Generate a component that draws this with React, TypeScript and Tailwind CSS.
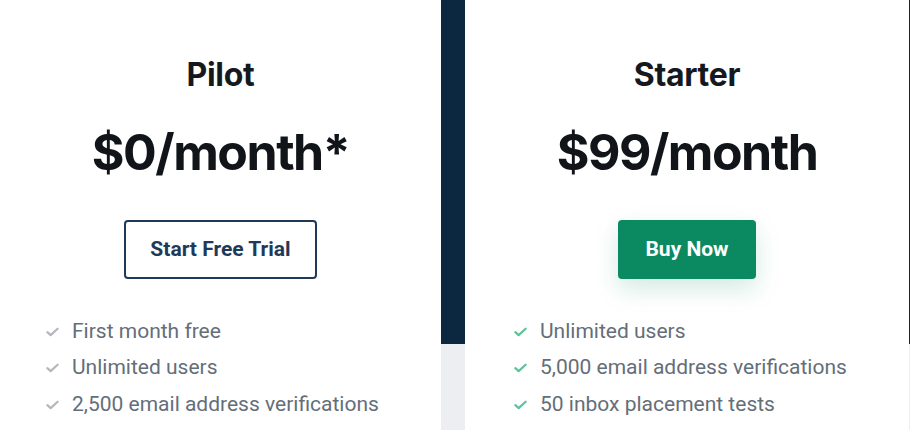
import type { ReactNode } from 'react'

type Plan = {
  name: string
  price: string
  cta: string
  primary: boolean
  features: string[]
}

const plans: Plan[] = [
  {
    name: 'Pilot',
    price: '$0/month*',
    cta: 'Start Free Trial',
    primary: false,
    features: ['First month free', 'Unlimited users', '2,500 email address verifications'],
  },
  {
    name: 'Starter',
    price: '$99/month',
    cta: 'Buy Now',
    primary: true,
    features: ['Unlimited users', '5,000 email address verifications', '50 inbox placement tests'],
  },
]

function Check({ green }: { green: boolean }) {
  return (
    <svg
      viewBox="0 0 14 10"
      className={green ? 'w-[13px] h-[10px] text-[#5cc39a]' : 'w-[13px] h-[10px] text-[#b4b8bd]'}
      fill="none"
      stroke="currentColor"
      strokeWidth="2.4"
      strokeLinecap="round"
      strokeLinejoin="round"
    >
      <path d="M1.5 5.2 L5 8.3 L12.5 1.5" />
    </svg>
  )
}

function Gutter({ className }: { className: string }): ReactNode {
  return (
    <div className={`flex flex-col shrink-0 ${className}`}>
      <div className="h-[344px] bg-[#0c2840]" />
      <div className="flex-1 bg-[#eceef2]" />
    </div>
  )
}

function PlanCard({ plan, className }: { plan: Plan; className: string }) {
  return (
    <div className={`bg-white flex flex-col items-center pt-[56px] ${className}`}>
      <h2 className="text-[32px] leading-[38px] font-bold text-[#15191e] font-['Inter',sans-serif] tracking-[-0.01em]">
        {plan.name}
      </h2>
      <div className="mt-[28px] text-[50px] leading-[60px] font-bold text-[#111418] font-['Inter',sans-serif] tracking-[-0.03em]">
        {plan.price}
      </div>
      {plan.primary ? (
        <button
          type="button"
          className="mt-[38px] h-[59px] w-[138px] rounded-[4px] bg-[#0b8a62] text-white text-[21px] font-bold font-['Roboto',sans-serif] shadow-[0_10px_24px_rgba(11,138,98,0.18)]"
        >
          {plan.cta}
        </button>
      ) : (
        <button
          type="button"
          className="mt-[38px] h-[59px] w-[193px] rounded-[4px] border-2 border-[#1f3a58] bg-white text-[#1f3a58] text-[21px] font-bold font-['Roboto',sans-serif]"
        >
          {plan.cta}
        </button>
      )}
      <ul className="self-stretch mt-[40px] flex flex-col gap-[11.5px]">
        {plan.features.map((f) => (
          <li key={f} className="flex items-center h-[25px]">
            <span className="w-[26px] flex justify-start">
              <Check green={plan.primary} />
            </span>
            <span className="text-[21px] text-[#646e79] font-['Roboto',sans-serif]">{f}</span>
          </li>
        ))}
      </ul>
    </div>
  )
}

export default function App() {
  return (
    <div className="w-[910px] h-[430px] flex overflow-hidden bg-white">
      <PlanCard plan={plans[0]} className="w-[441px] [&_ul]:pl-[46px]" />
      <Gutter className="w-[24px]" />
      <PlanCard plan={plans[1]} className="w-[444px] [&_ul]:pl-[49px]" />
      <Gutter className="w-[1px]" />
    </div>
  )
}
